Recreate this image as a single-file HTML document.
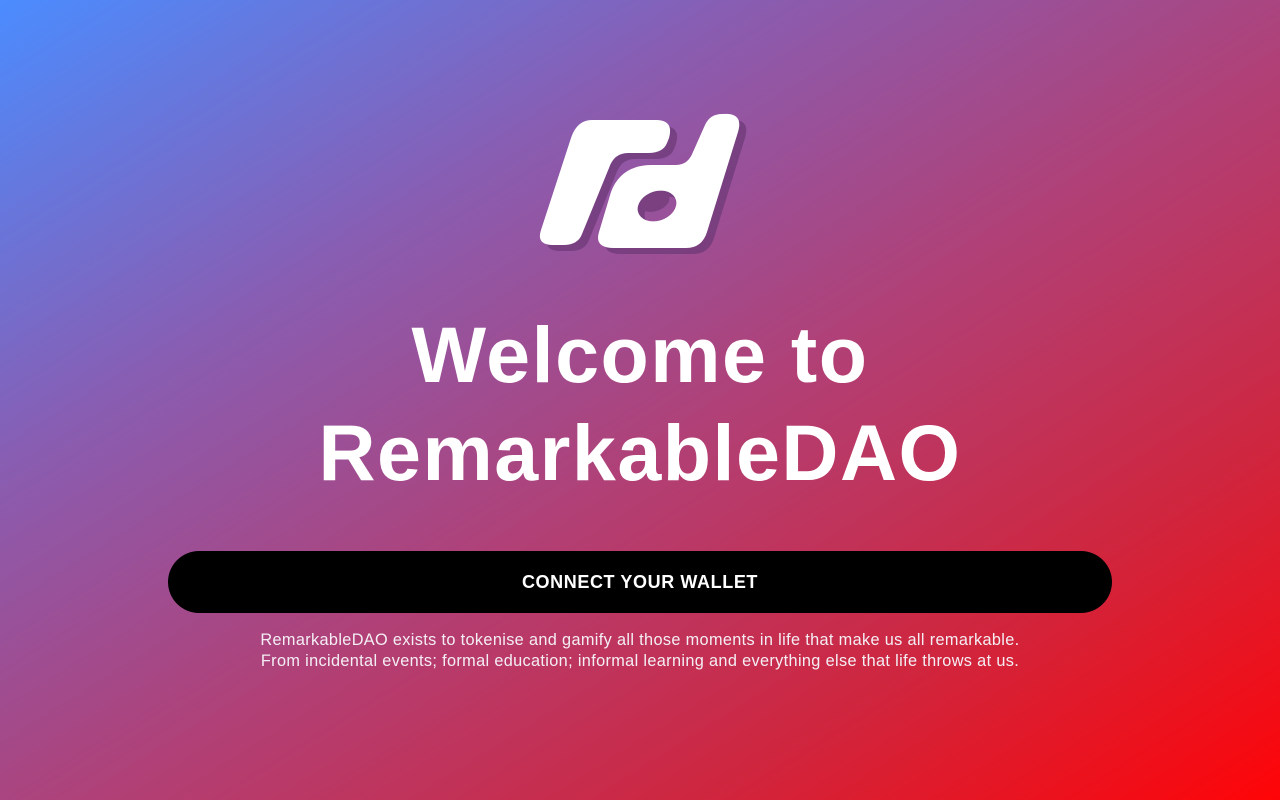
<!DOCTYPE html>
<html><head><style>
html,body{margin:0;width:1280px;height:800px;overflow:hidden}
body{background:linear-gradient(to bottom right,#4b8cff 0%,#8a5cb0 30%,#b23f74 55%,#d0253d 78%,#ff0407 100%);font-family:"Liberation Sans",sans-serif;color:#fff;position:relative}
svg{position:absolute;left:0;top:0}
h1{position:absolute;top:306px;left:0;width:1280px;margin:0;text-align:center;font-size:79px;line-height:98px;font-weight:bold;letter-spacing:1.5px}
.btn{position:absolute;left:168px;top:551px;width:944px;height:62px;border-radius:31px;background:#000;text-align:center;line-height:62px;font-weight:bold;font-size:18px;letter-spacing:0.6px}
p{position:absolute;top:630px;left:0;width:1280px;margin:0;text-align:center;font-size:16.3px;line-height:21px;color:#f4eef4;letter-spacing:0.35px}
</style></head><body>
<svg width="1280" height="300" viewBox="0 0 1280 300">
<g fill="#6e3a78" opacity="0.75" transform="translate(7,6)">
<path d="M592 120 L656 120 Q674 120 669 138 L667 143 Q663 153 648 153 L628 153 Q614 153 609 168 L582 234 Q578 245 563 245 L553 245 Q536 245 541 230 L571 138 Q577 120 592 120 Z"/>
<path fill-rule="evenodd" d="M722 114 Q744 112 738 132 L707 232 Q702 248 686 248 L614 248 Q594 248 599 232 L611 192 Q621 165 652 165 L676 165 Q688 165 693 152 L705 125 Q710 114 722 114 Z M638 206 a19 14 -20 1 0 38 0 a19 14 -20 1 0 -38 0 Z"/>
</g>
<g fill="#fff">
<path d="M592 120 L656 120 Q674 120 669 138 L667 143 Q663 153 648 153 L628 153 Q614 153 609 168 L582 234 Q578 245 563 245 L553 245 Q536 245 541 230 L571 138 Q577 120 592 120 Z"/>
<path fill-rule="evenodd" d="M722 114 Q744 112 738 132 L707 232 Q702 248 686 248 L614 248 Q594 248 599 232 L611 192 Q621 165 652 165 L676 165 Q688 165 693 152 L705 125 Q710 114 722 114 Z M638 206 a19 14 -20 1 0 38 0 a19 14 -20 1 0 -38 0 Z"/>
</g>
<ellipse cx="655" cy="202" rx="15" ry="9" transform="rotate(-20 655 202)" fill="#7a4080"/>
</svg>
<h1>Welcome to<br>RemarkableDAO</h1>
<div class="btn">CONNECT YOUR WALLET</div>
<p>RemarkableDAO exists to tokenise and gamify all those moments in life that make us all remarkable.<br>From incidental events; formal education; informal learning and everything else that life throws at us.</p>
</body></html>
